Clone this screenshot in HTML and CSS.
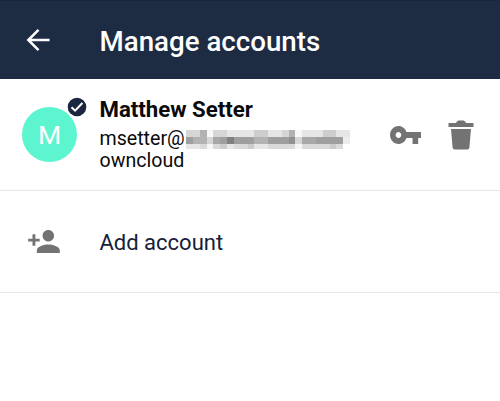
FILE: index.html
```html
<!DOCTYPE html>
<html lang="en">
<head>
<meta charset="utf-8">
<title>Manage accounts</title>
<link rel="stylesheet" href="styles.css">
</head>
<body>
<header class="toolbar">
  <svg class="back" viewBox="0 0 24 24" fill="none" stroke="#fff" stroke-width="2.5"><path d="M23.500 12H2.500M12.500 1.800L2.300 12l10.200 10.200"/></svg>
  <h1 class="title">Manage accounts</h1>
</header>
<main>
  <section class="row account">
    <div class="avatar">M
      <svg class="badge" viewBox="0 0 20 20"><circle cx="10" cy="10" r="9.3" fill="#1b2740"/><path d="M4.500 10.200l3.600 3.500L15.400 6" fill="none" stroke="#fff" stroke-width="2"/></svg>
    </div>
    <div class="info">
      <div class="name">Matthew Setter</div>
      <div class="line">msetter@<svg class="mosaic" viewBox="0 0 24 19" preserveAspectRatio="none" shape-rendering="crispEdges">
        <path fill="#e6e6e6" d="M0 0h24v7H0z"/>
        <path fill="#d6d6d6" d="M0 0h2v7H0zM4 0h2v7H4zM14 0h1v7h-1z"/>
        <path fill="#cdcdcd" d="M10 0h2v7h-2zM20 0h2v7h-2z"/>
        <path fill="#b2b2b2" d="M2 0h1v7H2zM15 0h1v7h-1z"/>
        <path fill="#f8f8f8" d="M3 0h1v7H3zM16 0h1v7h-1z"/>
        <path fill="#9f9f9f" d="M0 7h24v7H0z"/>
        <path fill="#b3b3b3" d="M1 7h2v7H1zM10 7h2v7h-2z"/>
        <path fill="#a8a8a8" d="M4 7h1v7H4zM17 7h2v7h-2z"/>
        <path fill="#d6d6d6" d="M3 7h1v7H3zM16 7h1v7h-1z"/>
        <path fill="#808080" d="M6 7h1v7H6z"/>
        <path fill="#909090" d="M15 7h1v7h-1z"/>
        <path fill="#ececec" d="M23 7h1v7h-1z"/>
        <path fill="#dadada" d="M0 14h23v5H0z"/>
        <path fill="#e6e6e6" d="M0 14h2v5H0zM6 14h1v5H6zM10 14h2v5h-2z"/>
        <path fill="#cccccc" d="M5 14h1v5H5zM9 14h1v5H9zM21 14h1v5h-1z"/>
        <path fill="#f6f6f6" d="M3 14h1v5H3zM16 14h1v5h-1z"/>
      </svg></div>
      <div class="line">owncloud</div>
    </div>
    <svg class="key" viewBox="1 6 22 12" preserveAspectRatio="none" fill="#737373"><path d="M12.650 10C11.830 7.670 9.610 6 7 6c-3.310 0-6 2.690-6 6s2.690 6 6 6c2.610 0 4.830-1.670 5.650-4H17v4h4v-4h2v-4H12.650zM7 14c-1.100 0-2-.9-2-2s.9-2 2-2 2 .9 2 2-.9 2-2 2z"/></svg>
    <svg class="trash" viewBox="0 0 26 30" fill="#737373"><path d="M.5 3H8q1-2.500 2.500-2.500h5Q17 .5 18 3h7.500v4H.500zM3 9h20l-1.600 18.500q-.2 2-2 2H6.600q-1.800 0-2-2z"/></svg>
  </section>
  <section class="row add">
    <svg class="person" viewBox="1 4 22 16" fill="#737373"><path d="M15 12c2.210 0 4-1.790 4-4s-1.790-4-4-4-4 1.790-4 4 1.790 4 4 4zm-9-2V7H4v3H1v2h3v3h2v-3h3v-2H6zm9 4c-2.670 0-8 1.340-8 4v2h16v-2c0-2.660-5.330-4-8-4z"/></svg>
    <span class="addlabel">Add account</span>
  </section>
</main>
</body>
</html>
```
FILE: styles.css
```css
*{box-sizing:border-box}
body{margin:0;background:#fff;font-family:Roboto,sans-serif;color:#0b0b0b}
.toolbar{height:79px;background:#1e2c43;border-top:1px solid #1b2440;border-bottom:1px solid #1b2745;display:flex;align-items:center;padding:3px 0 0 26px}
.back{width:24px;height:24px;margin-right:49.500px;margin-top:-2px}
.title{margin:0;padding-top:1px;font-size:27.7px;font-weight:500;line-height:36px;color:#fff}
.row{display:flex;align-items:center;border-bottom:1px solid #e6e6e6}
.account{height:112px;padding-left:22px}
.avatar{position:relative;width:55px;height:55px;border-radius:50%;background:#5cf5d0;color:#fff;font-size:26.5px;line-height:56px;text-align:center;margin-right:22.500px}
.badge{position:absolute;left:45px;top:-10px;width:20px;height:20px}
.info{width:290.500px;padding-top:3px}
.name{font-size:22.2px;font-weight:700;line-height:28px;margin-top:-5px;margin-bottom:5px}
.line{font-size:19.6px;line-height:22px;display:flex;align-items:center}
.mosaic{width:164px;height:19px;margin-left:1px}
.key{width:31px;height:18px}
.trash{width:26px;height:30px;margin-left:27px}
.add{height:102px;padding-left:28px}
.person{width:32px;height:23px;margin-right:39.500px}
.addlabel{font-size:22px;line-height:28px;padding-top:2px;color:#16203a}
```
